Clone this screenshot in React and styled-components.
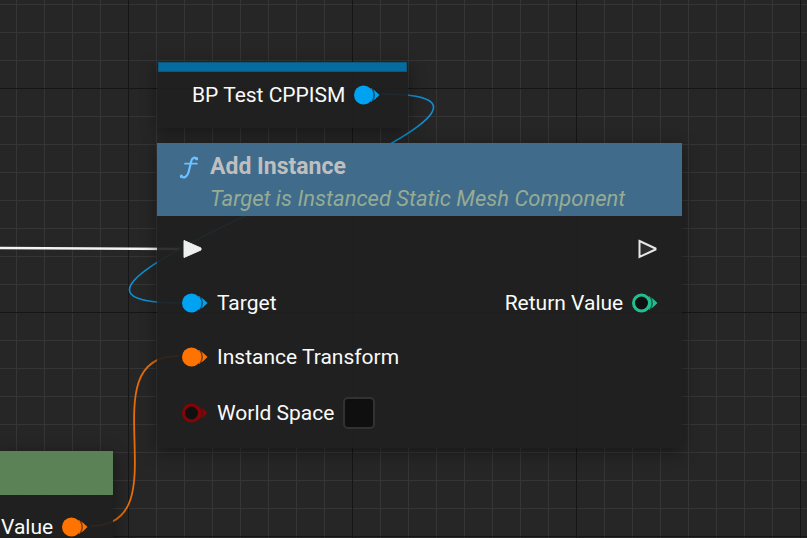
import React from "react";
import styled, { createGlobalStyle } from "styled-components";

const GlobalStyle = createGlobalStyle`
  *, *::before, *::after { box-sizing: border-box; }
  body {
    margin: 0;
    background: #262626;
    font-family: Roboto, "Liberation Sans", sans-serif;
    color: #fafafa;
  }
`;

const Canvas = styled.main`
  position: relative;
  min-height: 100vh;
  overflow: hidden;
  background-color: #262626;
  background-image:
    linear-gradient(to right, #161616 1px, transparent 1px),
    linear-gradient(to bottom, #161616 1px, transparent 1px),
    linear-gradient(to right, #353535 1px, transparent 1px),
    linear-gradient(to bottom, #353535 1px, transparent 1px);
  background-size: 224px 224px, 224px 224px, 28px 28px, 28px 28px;
  background-position: 128px 88px, 128px 88px, 16px 4px, 16px 4px;
`;

const Wires = styled.svg`
  position: absolute;
  inset: 0;
  width: 100%;
  height: 100%;
  fill: none;
  pointer-events: none;
`;

const Node = styled.article`
  position: absolute;
  left: ${(p) => p.$x}px;
  top: ${(p) => p.$y}px;
  background: rgba(32, 32, 32, 0.92);
  box-shadow: 0 4px 16px rgba(0, 0, 0, 0.4);
`;

const VariableBar = styled.div`
  height: 10px;
  margin: 0 1px;
  background: #066c9f;
  border: 1px solid #0b587f;
`;

const VariableBody = styled.div`
  display: flex;
  justify-content: flex-end;
  padding: 9px 28px 20px 35px;
`;

const Header = styled.header`
  display: grid;
  grid-template-columns: 20px auto;
  column-gap: 11px;
  padding: 8px 57px 1px 22px;
  background: #406b8a;
`;

const Title = styled.h1`
  margin: 0;
  font-size: 23px;
  line-height: 32px;
  font-weight: 700;
  color: #bfbfbf;
`;

const Subtitle = styled.p`
  grid-column: 2;
  margin: 0;
  font-size: 22px;
  line-height: 32px;
  font-style: italic;
  white-space: nowrap;
  color: #96ab94;
`;

const FunctionIcon = styled.svg`
  width: 20px;
  height: 24px;
  margin-top: 4px;
  fill: none;
  stroke: #6dc1ff;
  stroke-linecap: round;
  stroke-linejoin: round;
`;

const Body = styled.div`
  display: flex;
  justify-content: space-between;
  padding: 19px 24px 19px 25px;
`;

const PinColumn = styled.div`
  display: flex;
  flex-direction: column;
  gap: 27px;
  align-items: ${(p) => (p.$side === "out" ? "flex-end" : "flex-start")};
`;

const PinRow = styled.div`
  display: flex;
  align-items: center;
  gap: 9px;
  min-height: 27px;
  font-size: 21px;
  line-height: 25px;
  white-space: nowrap;
`;

const PinName = styled.span`
  padding-top: 2px;
`;

const PinShape = styled.svg`
  flex: none;
  width: 26px;
  height: 20px;
`;

const CheckLabel = styled.label`
  display: flex;
  align-items: center;
  gap: 9px;
`;

const CheckBox = styled.input`
  appearance: none;
  width: 32px;
  height: 32px;
  margin: 0;
  background: #0f0f0f;
  border: 2px solid #323232;
  border-radius: 5px;
  &:checked { background: #0070e0; }
`;

const PureHeader = styled.div`
  height: 44px;
  background: #5a8256;
`;

const PureBody = styled.div`
  padding: 18px 25px 30px 1px;
`;

function DataPin({ color, connected }) {
  return (
    <PinShape viewBox="0 0 26 20" aria-hidden="true">
      <path d="M17 3 Q22 6 25.5 10 Q22 14 17 17 Z" fill={color} />
      <path d="M18 3.5 Q22.5 10 18 16.5" fill="none" stroke="#202020" strokeOpacity="0.6" strokeWidth="1.5" />
      {connected ? (
        <circle cx="9.5" cy="10" r="9.5" fill={color} />
      ) : (
        <circle cx="9.5" cy="10" r="8" fill="#101010" stroke={color} strokeWidth="3" />
      )}
    </PinShape>
  );
}

function ExecPin({ connected }) {
  return (
    <PinShape viewBox="0 0 26 20" aria-hidden="true">
      {connected ? (
        <path d="M2 1.5 L19 9 V11 L2 18.5 Z" fill="#efefef" stroke="#efefef" strokeWidth="1" />
      ) : (
        <path d="M7.5 2 L23.5 9.5 V10.5 L7.5 18 Z" fill="#2c2c2c" stroke="#e6e6e6" strokeWidth="2" />
      )}
    </PinShape>
  );
}

const BLUE = "#00a2f2";
const ORANGE = "#ff7300";

export default function App() {
  return (
    <>
      <GlobalStyle />
      <Canvas>
        <Wires aria-hidden="true">
          <path d="M0 248 L180 249" stroke="#f4f4f4" strokeWidth="2.5" />
          <path d="M382 94 C620 94 -57 303 181 303" stroke="#0f8ed2" strokeWidth="1.6" />
          <path d="M91 526 C183 526 86 356 178 356" stroke="#e56c0b" strokeWidth="1.8" />
        </Wires>

        <Node $x={157} $y={62}>
          <VariableBar />
          <VariableBody>
            <PinRow>
              <PinName>BP Test CPPISM</PinName>
              <DataPin color={BLUE} connected />
            </PinRow>
          </VariableBody>
        </Node>

        <Node $x={0} $y={451}>
          <PureHeader />
          <PureBody>
            <PinRow>
              <PinName>Value</PinName>
              <DataPin color={ORANGE} connected />
            </PinRow>
          </PureBody>
        </Node>

        <Node $x={157} $y={143}>
          <Header>
            <FunctionIcon viewBox="0 0 20 24" aria-hidden="true">
              <path d="M17.8 4 C16.4 1.8 13.2 2.4 12.3 6 L9.6 17 C8.6 21.4 5.2 23.8 2.2 21.6" strokeWidth="2.2" />
              <path d="M6 8.7 H17.8" strokeWidth="1.8" />
              <circle cx="17.6" cy="3.7" r="0.9" strokeWidth="1.4" />
              <circle cx="2.4" cy="21.2" r="0.9" strokeWidth="1.4" />
            </FunctionIcon>
            <Title>Add Instance</Title>
            <Subtitle>Target is Instanced Static Mesh Component</Subtitle>
          </Header>
          <Body>
            <PinColumn>
              <PinRow>
                <ExecPin connected />
              </PinRow>
              <PinRow>
                <DataPin color={BLUE} connected />
                <PinName>Target</PinName>
              </PinRow>
              <PinRow>
                <DataPin color={ORANGE} connected />
                <PinName>Instance Transform</PinName>
              </PinRow>
              <PinRow>
                <DataPin color="#840508" />
                <CheckLabel>
                  World Space
                  <CheckBox type="checkbox" />
                </CheckLabel>
              </PinRow>
            </PinColumn>
            <PinColumn $side="out">
              <PinRow>
                <ExecPin />
              </PinRow>
              <PinRow>
                <PinName>Return Value</PinName>
                <DataPin color="#1fbf8f" />
              </PinRow>
            </PinColumn>
          </Body>
        </Node>
      </Canvas>
    </>
  );
}
